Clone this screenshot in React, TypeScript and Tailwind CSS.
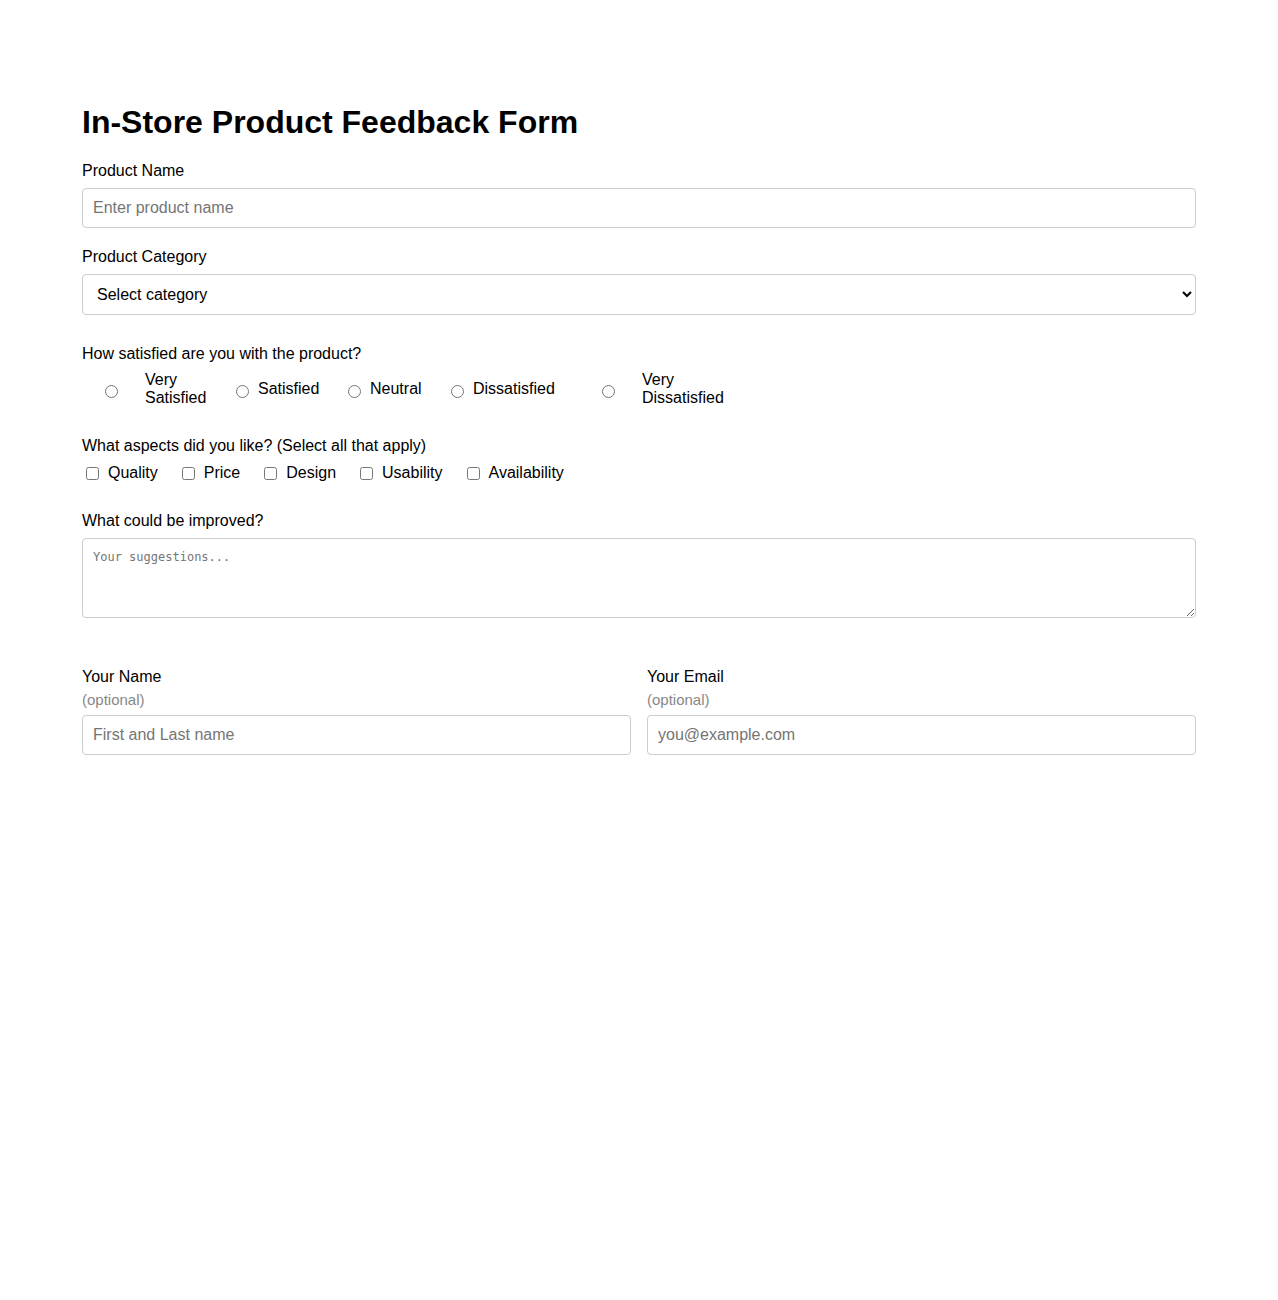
import React from 'react'

const ratings = [
  { label: 'Very Satisfied', box: 'w-[154px] pl-[23px]', text: 'ml-[27px] w-[64px]' },
  { label: 'Satisfied', box: 'w-[112px]', text: 'ml-[9px]' },
  { label: 'Neutral', box: 'w-[103px]', text: 'ml-[9px]' },
  { label: 'Dissatisfied', box: 'w-[151px]', text: 'ml-[9px]' },
  { label: 'Very Dissatisfied', box: 'w-[160px]', text: 'ml-[27px] w-[90px]' },
]

const aspects = ['Quality', 'Price', 'Design', 'Usability', 'Availability']

const inputClass =
  'block w-full h-[40px] px-[10px] border border-[#cccccc] rounded-[4px] text-[16px] text-black placeholder:text-[#757575] bg-white outline-none'

export default function App() {
  return (
    <div className="min-h-[1300px] bg-white text-black font-['Liberation_Sans',Arial,sans-serif]">
      <form className="mx-auto w-[1114px] pt-[104px]" onSubmit={(e) => e.preventDefault()}>
        <h1 className="text-[32px] font-bold leading-[37px] mb-[21px]">In-Store Product Feedback Form</h1>

        {/* Product name */}
        <label className="block text-[16px] leading-[18px] mb-[8px]">Product Name</label>
        <input type="text" placeholder="Enter product name" className={inputClass} />

        {/* Category */}
        <label className="block text-[16px] leading-[18px] mt-[20px] mb-[8px]">Product Category</label>
        <select
          defaultValue=""
          className="block w-full h-[41px] px-[10px] border border-[#cccccc] rounded-[4px] text-[16px] text-black bg-white outline-none"
        >
          <option value="">Select category</option>
          <option value="electronics">Electronics</option>
          <option value="clothing">Clothing</option>
          <option value="home">Home &amp; Garden</option>
          <option value="grocery">Grocery</option>
        </select>

        {/* Satisfaction */}
        <p className="text-[16px] leading-[18px] mt-[30px]">How satisfied are you with the product?</p>
        <div className="flex mt-[8px] h-[36px]">
          {ratings.map((r) => (
            <label key={r.label} className={`flex items-center shrink-0 ${r.box}`}>
              <input type="radio" name="satisfaction" className="m-0 w-[13px] h-[13px] shrink-0 translate-y-[2px]" />
              <span className={`text-[16px] leading-[18px] ${r.text}`}>{r.label}</span>
            </label>
          ))}
        </div>

        {/* Aspects */}
        <p className="text-[16px] leading-[18px] mt-[30px]">What aspects did you like? (Select all that apply)</p>
        <div className="flex gap-[20px] mt-[9px]">
          {aspects.map((a) => (
            <label key={a} className="flex items-center">
              <input type="checkbox" className="m-0 ml-[4px] w-[13px] h-[13px]" />
              <span className="ml-[9px] text-[16px] leading-[18px]">{a}</span>
            </label>
          ))}
        </div>

        {/* Improvements */}
        <label className="block text-[16px] leading-[18px] mt-[30px] mb-[8px]">What could be improved?</label>
        <textarea
          placeholder="Your suggestions..."
          className="block w-full h-[80px] p-[10px] border border-[#cccccc] rounded-[4px] text-[12px] leading-[16px] font-['DejaVu_Sans_Mono',monospace] placeholder:text-[#757575] outline-none"
        />

        {/* Contact */}
        <div className="grid grid-cols-2 gap-[16px] mt-[50px]">
          <div>
            <label className="block text-[16px] leading-[18px]">Your Name</label>
            <div className="text-[15px] leading-[17px] text-[#888888] mt-[5px] mb-[7px]">(optional)</div>
            <input type="text" placeholder="First and Last name" className={inputClass} />
          </div>
          <div>
            <label className="block text-[16px] leading-[18px]">Your Email</label>
            <div className="text-[15px] leading-[17px] text-[#888888] mt-[5px] mb-[7px]">(optional)</div>
            <input type="email" placeholder="you@example.com" className={inputClass} />
          </div>
        </div>
      </form>
    </div>
  )
}
